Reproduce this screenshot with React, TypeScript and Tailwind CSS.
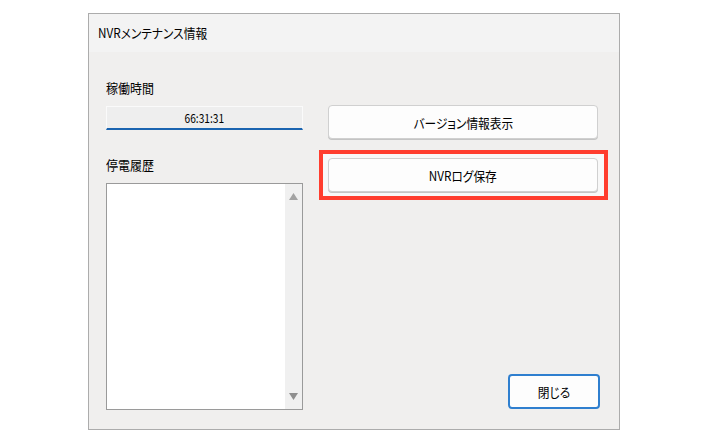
import React from "react";

const jp = "font-['Noto_Sans_CJK_JP',sans-serif] [font-feature-settings:'palt'] font-normal text-black";

const WinButton = ({ label, className }: { label: string; className?: string }) => (
  <button
    className={`flex items-center justify-center rounded-[4px] bg-[#fdfdfd] text-[13px] leading-none ${jp} ${className ?? ""}`}
  >
    <span className="inline-block scale-x-[0.9]">{label}</span>
  </button>
);

const App = () => {
  return (
    <div className="w-[708px] h-[443px] bg-white pt-[13px] pl-[88px]">
      <div className="w-[532px] h-[417px] border border-[#acacac] bg-[#f0efee] flex flex-col">
        {/* title bar */}
        <div className="h-[38px] bg-[#f3f3f3] flex items-center pl-[9px]">
          <span className={`text-[13px] inline-block origin-left scale-x-[0.9] ${jp}`}>
            NVRメンテナンス情報
          </span>
        </div>

        <div className="flex flex-1">
          {/* left column */}
          <div className="w-[197px] ml-[17px] flex flex-col">
            <div className="mt-[26px] h-[20px] flex items-center">
              <span className={`text-[13px] inline-block origin-left scale-x-[0.92] ${jp}`}>稼働時間</span>
            </div>
            <div className="mt-[8px] h-[24px] bg-[#eeeeee] border border-[#fafafa] border-b-[2px] border-b-[#1a64b0] flex items-center justify-center">
              <span className={`text-[12px] inline-block scale-x-[0.85] ${jp}`}>66:31:31</span>
            </div>
            <div className="mt-[25px] h-[20px] flex items-center">
              <span className={`text-[13px] inline-block origin-left scale-x-[0.92] ${jp}`}>停電履歴</span>
            </div>
            <div className="mt-[8px] h-[227px] border border-[#9a9a9a] bg-white flex">
              <div className="flex-1" />
              <div className="w-[17px] bg-[#f0f0f0] flex flex-col items-center justify-between py-[9px]">
                <svg width="9" height="7" viewBox="0 0 9 7">
                  <path d="M4.5 0 L9 7 L0 7 Z" fill="#a3a3a3" />
                </svg>
                <svg width="9" height="7" viewBox="0 0 9 7">
                  <path d="M0 0 L9 0 L4.5 7 Z" fill="#8f8f8f" />
                </svg>
              </div>
            </div>
          </div>

          {/* right column */}
          <div className="ml-[16px] w-[289px] flex flex-col">
            <WinButton
              label="バージョン情報表示"
              className="mt-[53px] ml-[9px] w-[270px] h-[34px] border border-[#d0d0d0] shadow-[0_1px_0_#c4c4c4]"
            />
            <div className="mt-[11px] h-[50px] border-[4px] border-[#ff3d2e] bg-[#f8f8f8] pt-[4px] pl-[5px]">
              <WinButton
                label="NVRログ保存"
                className="w-[270px] h-[34px] border border-[#d0d0d0] shadow-[0_1px_0_#c4c4c4]"
              />
            </div>
            <div className="flex-1" />
            <WinButton
              label="閉じる"
              className="mb-[20px] ml-[189px] w-[92px] h-[35px] border-[2px] border-[#2f7fcf]"
            />
          </div>
        </div>
      </div>
    </div>
  );
};

export default App;
